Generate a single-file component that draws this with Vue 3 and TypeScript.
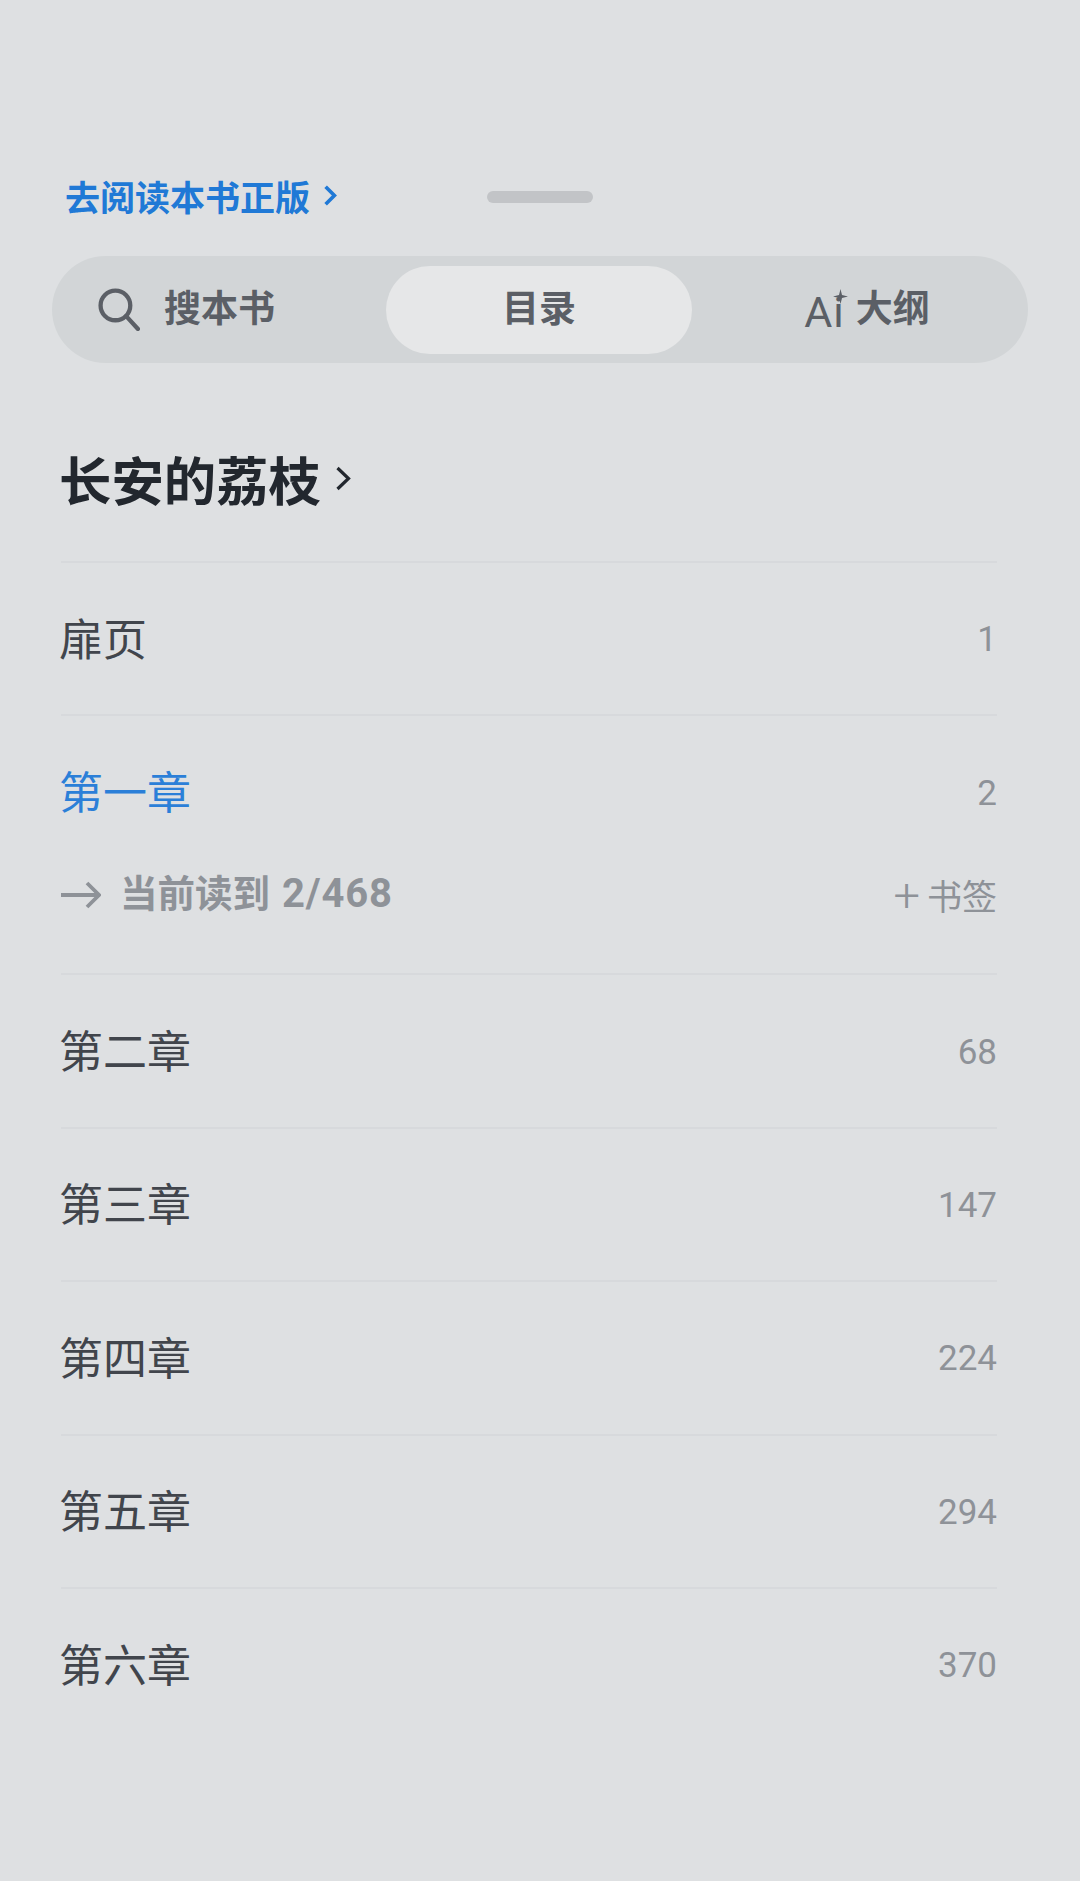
<script setup lang="ts">
interface Chapter {
  title: string;
  page: number;
  current?: boolean;
}

const chapters: Chapter[] = [
  { title: "扉页", page: 1 },
  { title: "第一章", page: 2, current: true },
  { title: "第二章", page: 68 },
  { title: "第三章", page: 147 },
  { title: "第四章", page: 224 },
  { title: "第五章", page: 294 },
  { title: "第六章", page: 370 },
];
</script>

<template>
  <div class="sheet">
    <div class="top">
      <a class="buy-link">
        <span>去阅读本书正版</span>
        <svg class="buy-arrow" viewBox="0 0 16 26" fill="none">
          <path d="M3 3l10 10L3 23" stroke="#2079d6" stroke-width="4.2" />
        </svg>
      </a>
      <div class="handle"></div>
    </div>

    <div class="tabs">
      <div class="tab tab-search">
        <svg class="search-icon" viewBox="0 0 42 42" fill="none" stroke="#5b5f66" stroke-width="4.2">
          <circle cx="18" cy="17" r="14.500" />
          <path d="M28.500 27.500L40 40" stroke-linecap="round" />
        </svg>
        <span>搜本书</span>
      </div>
      <div class="tab tab-active">目录</div>
      <div class="tab tab-outline">
        <span class="ai">A<span class="ai-i">i</span><svg class="spark" viewBox="0 0 14 14"><path d="M7 0l1.400 5.600L14 7 8.400 8.400 7 14 5.600 8.400 0 7l5.600-1.400z" fill="#5b5f66" /></svg></span>
        <span>大纲</span>
      </div>
    </div>

    <div class="book">
      <span>长安的荔枝</span>
      <svg class="book-arrow" viewBox="0 0 16 26" fill="none">
        <path d="M2.500 2.500l11 10.500-11 10.500" stroke="#22272e" stroke-width="3.200" />
      </svg>
    </div>

    <ul class="list">
      <li v-for="c in chapters" :key="c.title" class="item" :class="{ current: c.current }">
        <div class="row">
          <span class="name">{{ c.title }}</span>
          <span class="page">{{ c.page }}</span>
        </div>
        <div v-if="c.current" class="progress">
          <span class="progress-left">
            <svg class="progress-arrow" viewBox="0 0 40 28" fill="none" stroke="#8e9298" stroke-width="3.800">
              <path d="M0 14h38M26 2l12 12-12 12" />
            </svg>
            <span>当前读到<span class="progress-num">2/468</span></span>
          </span>
          <span class="bookmark"><span class="plus">+</span>书签</span>
        </div>
      </li>
    </ul>
  </div>
</template>

<style scoped>
.sheet {
  height: 1881px;
  box-sizing: border-box;
  padding-top: 170px;
  background: #dee0e2;
  font-family: "Noto Sans CJK SC", "Noto Sans", sans-serif;
  overflow: hidden;
}

.top {
  display: grid;
  grid-template-columns: 1fr 106px 1fr;
  align-items: center;
  height: 54px;
  padding-left: 65px;
  padding-right: 65px;
}

.buy-link {
  display: flex;
  align-items: center;
  gap: 13px;
  padding-bottom: 3px;
  font-size: 35px;
  line-height: 51px;
  font-weight: 700;
  color: #2079d6;
  white-space: nowrap;
}

.buy-arrow {
  width: 14px;
  height: 25px;
}

.handle {
  height: 12px;
  border-radius: 6px;
  background: #c2c4c7;
}

.tabs {
  display: grid;
  grid-template-columns: 334px 306px 1fr;
  align-items: center;
  height: 107px;
  margin: 32px 52px 0;
  border-radius: 54px;
  background: #d2d5d7;
  color: #5b5f66;
  font-size: 37px;
  font-weight: 700;
}

.tab {
  display: flex;
  align-items: center;
  box-sizing: border-box;
  height: 88px;
  padding-bottom: 7px;
  white-space: nowrap;
}

.tab-search {
  gap: 24px;
  padding-left: 45px;
}

.search-icon {
  width: 43px;
  height: 43px;
  margin-top: 6px;
}

.tab-active {
  justify-content: center;
  border-radius: 44px;
  background: #e6e7e8;
}

.tab-outline {
  justify-content: center;
  gap: 12px;
  padding-left: 14px;
}

.ai {
  position: relative;
  font-family: Roboto, sans-serif;
  font-size: 43px;
  line-height: 43px;
  font-weight: 400;
  top: 6px;
}

.ai-i {
  margin-left: 1px;
}

.spark {
  position: absolute;
  right: -4px;
  top: -2px;
  width: 15px;
  height: 15px;
}

.book {
  display: flex;
  align-items: center;
  gap: 14px;
  height: 72px;
  margin-top: 81px;
  padding-left: 60px;
  font-size: 52.400px;
  line-height: 68px;
  font-weight: 700;
  color: #22272e;
}

.book > span {
  margin-left: -1px;
  padding-bottom: 4px;
}

.book-arrow {
  width: 16px;
  height: 27px;
  margin-top: -4px;
}

.list {
  list-style: none;
  margin: 45px 0 0 61px;
  padding: 0;
  width: 936px;
}

.item {
  border-top: 2px solid #d7d9dc;
}

.row {
  display: flex;
  justify-content: space-between;
  align-items: center;
  box-sizing: border-box;
  height: 151.400px;
  padding-bottom: 4px;
}

.name {
  margin-left: -2px;
  font-size: 44px;
  color: #41454c;
}

.page {
  padding-top: 6px;
  font-family: Roboto, "Noto Sans", sans-serif;
  font-size: 35px;
  font-weight: 400;
  color: #8e9298;
}

.current .name {
  color: #2b7fd8;
}

.progress {
  display: flex;
  justify-content: space-between;
  align-items: center;
  height: 48px;
  margin-top: 3px;
  margin-bottom: 54.600px;
}

.progress-left {
  display: flex;
  align-items: center;
  gap: 19px;
  font-size: 37.500px;
  line-height: 44px;
  font-weight: 700;
  color: #8e9298;
}

.progress-left > span {
  padding-bottom: 4px;
}

.progress-num {
  margin-left: 12px;
  font-family: Roboto, sans-serif;
  font-size: 40px;
  letter-spacing: 0.8px;
}

.progress-arrow {
  width: 40px;
  height: 28px;
}

.bookmark {
  display: flex;
  align-items: center;
  font-size: 35px;
  color: #8e9298;
}

.plus {
  font-family: Roboto, sans-serif;
  font-size: 47px;
  line-height: 40px;
  font-weight: 300;
  margin-right: 7px;
}
</style>
